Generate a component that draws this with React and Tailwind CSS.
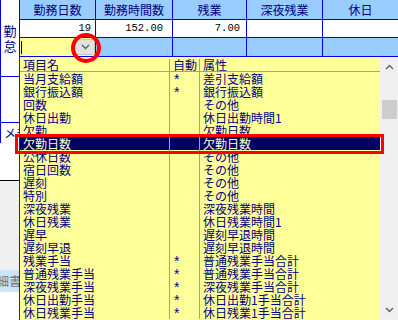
import React from 'react';

const rows = [
  ['当月支給額', '*', '差引支給額'],
  ['銀行振込額', '*', '銀行振込額'],
  ['回数', '', 'その他'],
  ['休日出勤', '', '休日出勤時間1'],
  ['欠勤', '', '欠勤日数'],
  ['欠勤日数', '', '欠勤日数', true],
  ['公休日数', '', 'その他'],
  ['宿日回数', '', 'その他'],
  ['遅刻', '', 'その他'],
  ['特別', '', 'その他'],
  ['深夜残業', '', '深夜残業時間'],
  ['休日残業', '', '休日残業時間1'],
  ['遅早', '', '遅刻早退時間'],
  ['遅刻早退', '', '遅刻早退時間'],
  ['残業手当', '*', '普通残業手当合計'],
  ['普通残業手当', '*', '普通残業手当合計'],
  ['深夜残業手当', '*', '深夜残業手当合計'],
  ['休日出勤手当', '*', '休日出勤1手当合計'],
  ['休日残業手当', '*', '休日残業1手当合計'],
];

function Chevron({ up }) {
  return (
    <svg width="9" height="6" viewBox="0 0 9 6" className="block">
      <path
        d={up ? 'M1 5 L4.5 1.5 L8 5' : 'M1 1 L4.5 4.5 L8 1'}
        fill="none"
        stroke="#606060"
        strokeWidth="1.4"
      />
    </svg>
  );
}

function ListRow({ name, auto, attr, selected }) {
  const text = selected ? 'text-[#ffffcc] bg-[#000066]' : 'text-[#000080]';
  return (
    <div className={`flex h-[13px] leading-[13px] ${text}`}>
      <div className="w-[150px] pl-[3px] border-r border-[#a0a0a0] whitespace-nowrap">{name}</div>
      <div className="w-[30px] pl-[4px] border-r border-[#a0a0a0] font-['Liberation_Sans',sans-serif] text-[14px] leading-[14px]">{auto}</div>
      <div className="flex-1 pl-[3px] whitespace-nowrap">{attr}</div>
    </div>
  );
}

export default function App() {
  return (
    <div className="relative w-[398px] h-[320px] overflow-hidden bg-white font-['Noto_Sans_CJK_JP',sans-serif] text-[12px]">
      <div className="flex">
        {/* left side labels */}
        <div className="w-[20px] flex flex-col">
          <div className="h-[77px] border-l border-r border-b border-[#0000ee] flex flex-col items-center justify-center text-[13px] leading-[15px] text-[#000080]">
            <span>勤</span>
            <span>怠</span>
          </div>
          <div className="h-[46px] border-l border-b border-[#0000ee]"></div>
          <div className="h-[20px] border-l border-[#0000ee] pl-[3px] text-[12px] leading-[20px] text-[#000080] whitespace-nowrap">メモ</div>
          <div className="h-[38px] border-b border-black"></div>
          <div className="h-[89px] bg-[#f0f0f0]"></div>
          <div className="h-[22px] bg-[#cce4f7] overflow-hidden">
            <div className="text-[#707070] leading-[22px] whitespace-nowrap -ml-[15px]">明細書</div>
          </div>
          <div className="flex-1 bg-[#dcdcdc] h-[30px]"></div>
        </div>

        {/* main table */}
        <div className="w-[378px] text-[#000080]">
          <div className="flex h-[20px] bg-[#99ccff] border-b border-[#0000ee] leading-[19px]">
            <div className="w-[76px] border-r border-[#0000ee] text-center">勤務日数</div>
            <div className="w-[77px] border-r border-[#0000ee] text-center">勤務時間数</div>
            <div className="w-[74px] border-r border-[#0000ee] text-center">残業</div>
            <div className="w-[76px] border-r border-[#0000ee] text-center">深夜残業</div>
            <div className="w-[75px] text-center">休日</div>
          </div>
          <div className="flex h-[18px] bg-white border-b border-[#0000ee] leading-[17px] text-black font-['Liberation_Mono',monospace] text-[10.5px]">
            <div className="w-[76px] border-r border-[#0000ee] text-right pr-[4px]">19</div>
            <div className="w-[77px] border-r border-[#0000ee] text-right pr-[9px]">152.00</div>
            <div className="w-[74px] border-r border-[#0000ee] text-right pr-[6px]">7.00</div>
            <div className="w-[76px] border-r border-[#0000ee]"></div>
            <div className="w-[75px]"></div>
          </div>
          <div className="flex h-[19px] bg-[#99ccff] border-b border-[#0000ee]">
            <div className="w-[76px] border-r border-[#0000ee] bg-[#ffff99] flex items-stretch">
              <div className="flex-1 flex items-center pl-[1px]">
                <div className="w-[1px] h-[13px] bg-black"></div>
              </div>
              <div className="w-[20px] my-[1px] bg-[#e1e1e1] border border-[#c8c8c8] flex items-center justify-center">
                <Chevron />
              </div>
            </div>
            <div className="w-[77px] border-r border-[#0000ee]"></div>
            <div className="w-[74px] border-r border-[#0000ee]"></div>
            <div className="w-[76px] border-r border-[#0000ee]"></div>
            <div className="w-[75px]"></div>
          </div>
        </div>
      </div>

      {/* dropdown list */}
      <div className="absolute left-[19px] top-[57px] w-[379px] h-[263px] bg-[#ffff99] border-l border-[#303030] flex">
        <div className="flex-1 pt-[2px]">
          <div className="flex h-[13px] leading-[12px] text-[#000080] border-b border-[#a0a0a0]">
            <div className="w-[150px] pl-[3px] border-r border-[#a0a0a0]">項目名</div>
            <div className="w-[30px] pl-[3px] border-r border-[#a0a0a0] whitespace-nowrap">自動</div>
            <div className="flex-1 pl-[3px]">属性</div>
          </div>
          {rows.map((r) => (
            <ListRow key={r[0]} name={r[0]} auto={r[1]} attr={r[2]} selected={r[3]} />
          ))}
        </div>
        <div className="w-[18px] bg-[#f0f0f0] flex flex-col items-center">
          <div className="h-[16px] flex items-center justify-center mt-[2px]">
            <Chevron up />
          </div>
          <div className="mt-[25px] w-[15px] h-[19px] bg-[#cdcdcd]"></div>
          <div className="flex-1"></div>
          <div className="h-[16px] flex items-center justify-center mb-[2px]">
            <Chevron />
          </div>
        </div>
      </div>

      {/* annotations */}
      <div className="absolute left-[71px] top-[33px] w-[30px] h-[30px] rounded-full border-[4px] border-[#ff0000]"></div>
      <div className="absolute left-[15px] top-[134px] w-[369px] h-[20px] border-[3px] border-[#ff0000]"></div>
    </div>
  );
}
